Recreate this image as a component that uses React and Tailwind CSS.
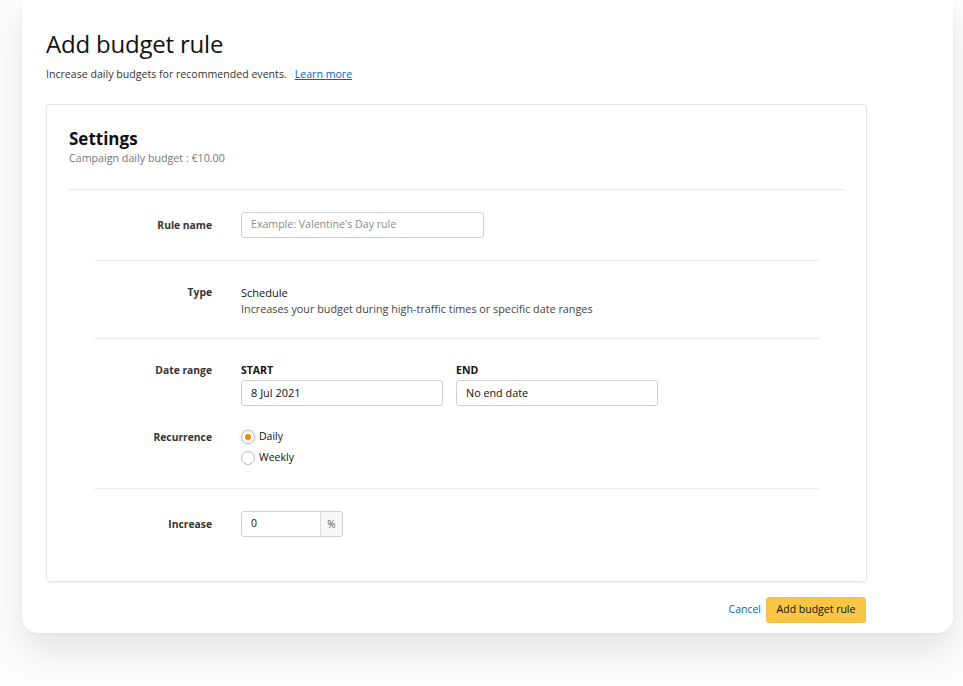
export default function App() {
  const font = { fontFamily: '"Open Sans", "Noto Sans", Arial, sans-serif' };
  const Label = ({ children }) => (
    <div className="w-[118px] shrink-0 text-right text-[10.3px] font-bold text-[#333] leading-[14px]">{children}</div>
  );
  return (
    <div className="w-[963px] h-[686px] bg-[#fdfdfd] overflow-hidden" style={font}>
      <div className="ml-[22px] mr-[10px] h-[633px] bg-white rounded-b-[16px] shadow-[0_18px_36px_rgba(0,0,0,0.10),0_0_6px_rgba(0,0,0,0.04)] pt-[29px] pl-[24px] pr-[86px]">
        <h1 className="text-[24px] leading-[30px] text-[#111] tracking-[-0.2px]">Add budget rule</h1>
        <p className="mt-[8px] text-[10.6px] leading-[14px] text-[#333]">
          Increase daily budgets for recommended events.
          <span className="ml-[8px] text-[#0066c0] underline">Learn more</span>
        </p>
        <div className="mt-[23px] h-[478px] border border-[#e4e4e4] rounded-[3px] shadow-[0_1px_2px_rgba(0,0,0,0.06)] px-[22px] pt-[24px]">
          <div className="text-[17px] font-bold leading-[20px] text-[#111]">Settings</div>
          <div className="mt-[2px] text-[10.7px] leading-[14px] text-[#777]">Campaign daily budget : €10.00</div>
          <div className="mt-[24px] border-t border-[#ececec]" />
          <div className="px-[25px]">
            {/* Rule name */}
            <div className="flex items-center gap-[29px] py-[22px]">
              <Label>Rule name</Label>
              <div className="w-[243px] h-[26px] border border-[#cfcfcf] rounded-[3px] flex items-center px-[9px] text-[10.6px] text-[#8a8a8a]">
                Example: Valentine's Day rule
              </div>
            </div>
            <div className="border-t border-[#ececec]" />
            {/* Type */}
            <div className="flex gap-[29px] pt-[24px] pb-[21px]">
              <Label>Type</Label>
              <div className="leading-[16px]">
                <div className="text-[11px] text-[#111]">Schedule</div>
                <div className="text-[#444] text-[10.8px]">Increases your budget during high-traffic times or specific date ranges</div>
              </div>
            </div>
            <div className="border-t border-[#ececec]" />
            {/* Date range */}
            <div className="pt-[24px] pb-[23px]">
              <div className="flex gap-[29px]">
                <Label>Date range</Label>
                <div className="flex gap-[13px]">
                  <div>
                    <div className="text-[10.5px] font-bold text-[#111] leading-[14px]">START</div>
                    <div className="mt-[3px] w-[202px] h-[26px] border border-[#cfcfcf] rounded-[3px] flex items-center px-[9px] text-[11px] text-[#111]">8 Jul 2021</div>
                  </div>
                  <div>
                    <div className="text-[10.5px] font-bold text-[#111] leading-[14px]">END</div>
                    <div className="mt-[3px] w-[202px] h-[26px] border border-[#cfcfcf] rounded-[3px] flex items-center px-[9px] text-[10.8px] text-[#111]">No end date</div>
                  </div>
                </div>
              </div>
              <div className="flex gap-[29px] mt-[24px]">
                <Label>Recurrence</Label>
                <div className="flex flex-col gap-[7px]">
                  <div className="flex items-center gap-[4px] h-[14px]">
                    <span className="w-[14px] h-[14px] rounded-full border border-[#b8b8b8] flex items-center justify-center shadow-[0_0_0_2px_rgba(0,0,0,0.04)]">
                      <span className="w-[6px] h-[6px] rounded-full bg-[#f08804]" />
                    </span>
                    <span className="text-[10.5px] text-[#111]">Daily</span>
                  </div>
                  <div className="flex items-center gap-[4px] h-[14px]">
                    <span className="w-[14px] h-[14px] rounded-full border border-[#b8b8b8]" />
                    <span className="text-[10.5px] text-[#111]">Weekly</span>
                  </div>
                </div>
              </div>
            </div>
            <div className="border-t border-[#ececec]" />
            {/* Increase */}
            <div className="flex items-center gap-[29px] pt-[22px]">
              <Label>Increase</Label>
              <div className="w-[102px] h-[26px] border border-[#cfcfcf] rounded-[3px] flex overflow-hidden">
                <div className="flex-1 flex items-center px-[9px] text-[10.5px] text-[#111]">0</div>
                <div className="w-[22px] border-l border-[#dcdcdc] bg-[#f7f7f7] flex items-center justify-center text-[10px] text-[#555]">%</div>
              </div>
            </div>
          </div>
        </div>
        <div className="mt-[15px] mr-[1px] flex justify-end items-center gap-[5px]">
          <span className="text-[10.5px] text-[#0066c0]">Cancel</span>
          <div className="w-[100px] h-[26px] rounded-[3px] border border-[#f2c04a] bg-[#f8c544] flex items-center justify-center text-[10.5px] text-[#111]">
            Add budget rule
          </div>
        </div>
      </div>
    </div>
  );
}
